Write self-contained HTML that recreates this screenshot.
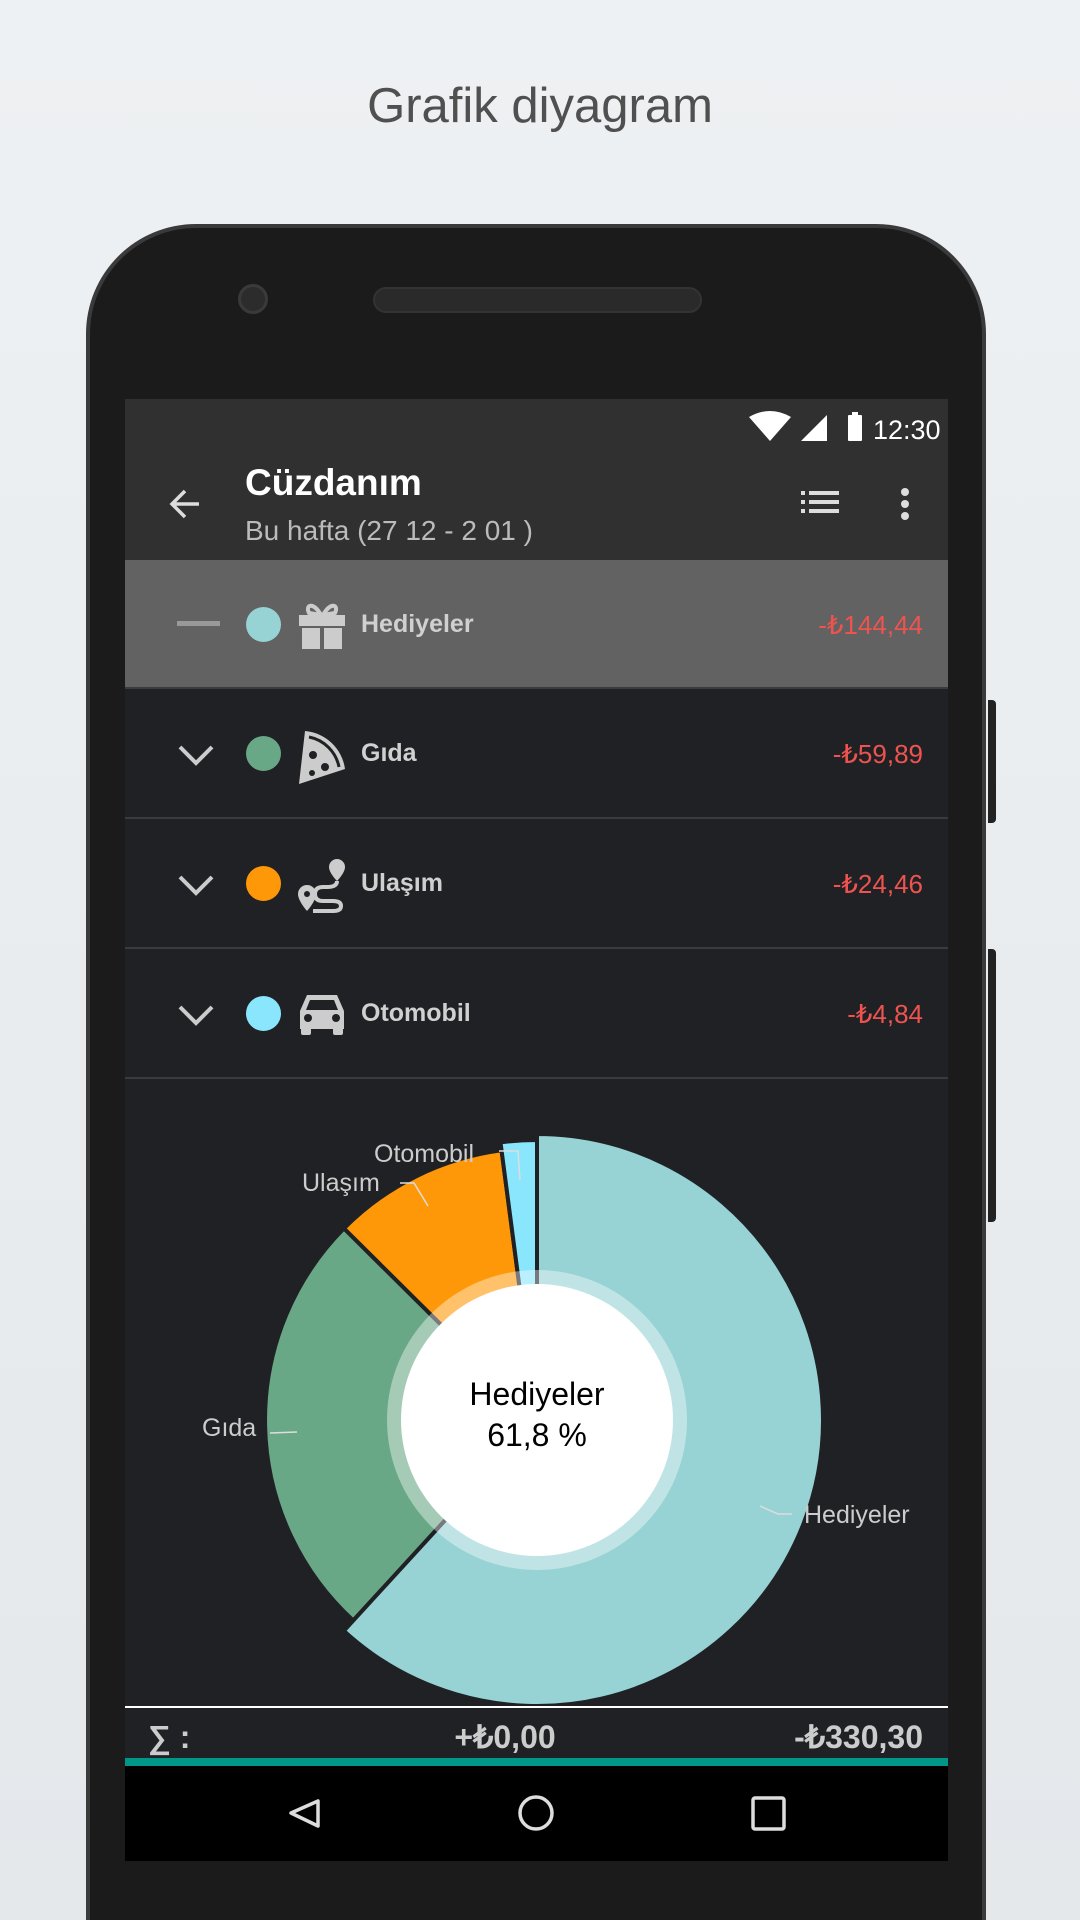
<!DOCTYPE html>
<html style="background:#e6eaed"><head><meta charset="utf-8"><style>
*{margin:0;padding:0;box-sizing:border-box}
html,body{width:1080px;height:1920px;overflow:hidden}
body{background:linear-gradient(#eef1f3,#e4e8eb);font-family:"Liberation Sans",sans-serif;position:relative}
.abs{position:absolute}
.title{left:0;width:1080px;top:78px;text-align:center;font-size:49px;color:#505050}
.phone{left:86px;top:224px;width:900px;height:1696px;background:#1b1b1b;border-radius:110px 110px 0 0;border:4px solid #3a3a3a;border-bottom:none}
.btn{background:#222;border-radius:0 4px 4px 0}
.screen{left:125px;top:399px;width:823px;height:1462px;background:#202124;overflow:hidden}
.row{position:absolute;left:0;width:823px;border-bottom:2px solid #3a3b3e}
.lbl{position:absolute;left:236px;font-weight:bold;font-size:25px;color:#d0d0d0}
.amt{position:absolute;right:25px;font-size:26px;color:#ef5350}
.dot{position:absolute;left:121px;width:35px;height:35px;border-radius:50%}
</style></head><body>
<div class="abs title">Grafik diyagram</div>
<div class="abs phone"></div>
<div class="abs btn" style="left:988px;top:700px;width:8px;height:123px"></div>
<div class="abs btn" style="left:988px;top:949px;width:8px;height:273px"></div>
<div class="abs" style="left:373px;top:287px;width:329px;height:26px;border-radius:13px;background:#2a2a2a;border:2px solid #333"></div>
<div class="abs" style="left:238px;top:284px;width:30px;height:30px;border-radius:50%;background:#2c2c2c;border:3px solid #3a3a3a"></div>
<div class="abs screen">
 <div class="abs" style="left:0;top:0;width:823px;height:161px;background:#303030"></div>
 <svg class="abs" style="left:620px;top:10px" width="210" height="36">
  <path d="M4 8 Q25 -4 46 8 L25 32Z" fill="#fff"/>
  <path d="M56 32 L82 6 L82 32Z" fill="#fff"/>
  <rect x="103" y="6" width="14" height="26" rx="1" fill="#fff"/><rect x="107" y="3" width="6" height="4" fill="#fff"/>
  <text x="128" y="30" font-size="27" fill="#fff" font-family="Liberation Sans">12:30</text>
 </svg>
 <svg class="abs" style="left:40px;top:85px" width="40" height="40"><path d="M34 20H8M20 7L7 20L20 33" stroke="#ddd" stroke-width="3.5" fill="none"/></svg>
 <div class="abs" style="left:120px;top:63px;font-size:37px;color:#fff;font-weight:bold">Cüzdanım</div>
 <div class="abs" style="left:120px;top:116px;font-size:28px;color:#bbb">Bu hafta (27 12 - 2 01 )</div>
 <svg class="abs" style="left:676px;top:92px" width="40" height="26"><g fill="#ddd"><rect x="0" y="0" width="4" height="4"/><rect x="8" y="0" width="30" height="4"/><rect x="0" y="9" width="4" height="4"/><rect x="8" y="9" width="30" height="4"/><rect x="0" y="18" width="4" height="4"/><rect x="8" y="18" width="30" height="4"/></g></svg>
 <svg class="abs" style="left:772px;top:86px" width="16" height="40"><g fill="#ddd"><circle cx="8" cy="7" r="4"/><circle cx="8" cy="19" r="4"/><circle cx="8" cy="31" r="4"/></g></svg>

 <div class="row" style="top:161px;height:129px;background:#626262">
  <div class="abs" style="left:52px;top:61px;width:43px;height:5px;background:#999"></div>
  <div class="dot" style="top:47px;background:#97d3d4"></div>
  <svg class="abs" style="left:172px;top:41px" width="50" height="50"><g fill="#ccc"><rect x="2" y="14" width="46" height="11"/><rect x="5" y="27" width="18" height="21"/><rect x="27" y="27" width="18" height="21"/><path d="M24 14 C16 0 8 4 12 12Z M26 14 C34 0 42 4 38 12Z" stroke="#ccc" stroke-width="4" fill="none"/></g></svg>
  <div class="lbl" style="top:50px">Hediyeler</div>
  <div class="amt" style="top:50px">-₺144,44</div>
 </div>
 <div class="row" style="top:290px;height:130px">
  <svg class="abs" style="left:52px;top:55px" width="40" height="24"><path d="M3 3L19 19L35 3" stroke="#ccc" stroke-width="4" fill="none"/></svg>
  <div class="dot" style="top:47px;background:#69a887"></div>
  <svg class="abs" style="left:172px;top:40px" width="50" height="56"><path d="M8 2 A44 44 0 0 1 48 40 L2 55Z" fill="#ccc"/><g fill="#202124"><circle cx="16" cy="26" r="4"/><circle cx="28" cy="38" r="4"/><circle cx="15" cy="44" r="3"/></g><path d="M12 8 A38 38 0 0 1 42 38" stroke="#202124" stroke-width="3" fill="none"/></svg>
  <div class="lbl" style="top:50px">Gıda</div>
  <div class="amt" style="top:50px">-₺59,89</div>
 </div>
 <div class="row" style="top:420px;height:130px">
  <svg class="abs" style="left:52px;top:55px" width="40" height="24"><path d="M3 3L19 19L35 3" stroke="#ccc" stroke-width="4" fill="none"/></svg>
  <div class="dot" style="top:47px;background:#ff9808"></div>
  <svg class="abs" style="left:172px;top:38px" width="50" height="56"><g fill="#ccc"><path d="M10 28a9 9 0 0 1 9 9c0 7-9 17-9 17s-9-10-9-17a9 9 0 0 1 9-9z"/><path d="M40 2a8 8 0 0 1 8 8c0 6-8 14-8 14s-8-8-8-14a8 8 0 0 1 8-8z"/></g><circle cx="10" cy="37" r="3" fill="#202124"/><path d="M40 24 L40 24 Q40 30 30 30 L26 30 Q18 30 18 37 Q18 44 26 44 L36 44 Q44 44 44 49 Q44 54 36 54 L16 54" stroke="#ccc" stroke-width="4" fill="none"/></svg>
  <div class="lbl" style="top:50px">Ulaşım</div>
  <div class="amt" style="top:50px">-₺24,46</div>
 </div>
 <div class="row" style="top:550px;height:130px">
  <svg class="abs" style="left:52px;top:55px" width="40" height="24"><path d="M3 3L19 19L35 3" stroke="#ccc" stroke-width="4" fill="none"/></svg>
  <div class="dot" style="top:47px;background:#8ae6fd"></div>
  <svg class="abs" style="left:172px;top:42px" width="50" height="46"><g fill="#ccc"><path d="M10 4H40L47 20V38H3V20Z"/><rect x="4" y="34" width="10" height="10" rx="2"/><rect x="36" y="34" width="10" height="10" rx="2"/></g><path d="M13 9H37L41 19H9Z" fill="#202124"/><g fill="#202124"><circle cx="11" cy="27" r="4"/><circle cx="39" cy="27" r="4"/></g></svg>
  <div class="lbl" style="top:50px">Otomobil</div>
  <div class="amt" style="top:50px">-₺4,84</div>
 </div>
</div>
<svg class="abs" style="left:0;top:0" width="1080" height="1920">
 <g stroke="#202124" stroke-width="4">
 <path d="M537 1420 L353.2 1620.5 A272 272 0 0 1 344 1228.4Z" fill="#69a887"/>
 <path d="M537 1420 L344 1228.4 A272 272 0 0 1 501.5 1150.3Z" fill="#ff9808"/>
 <path d="M537 1420 L500.5 1142.4 A280 280 0 0 1 537 1140Z" fill="#8ae6fd"/>
 <path d="M537 1420 L537 1134 A286 286 0 1 1 343.8 1630.9Z" fill="#97d3d4"/>
 </g>
 <circle cx="537" cy="1420" r="150" fill="#fff" opacity="0.4"/>
 <circle cx="537" cy="1420" r="136" fill="#fff"/>
 <text x="537" y="1405" font-size="32" text-anchor="middle" fill="#000" font-family="Liberation Sans">Hediyeler</text>
 <text x="537" y="1446" font-size="32" text-anchor="middle" fill="#000" font-family="Liberation Sans">61,8 %</text>
 <g font-size="25" fill="#ccc" font-family="Liberation Sans">
 <text x="374" y="1162">Otomobil</text>
 <text x="302" y="1191">Ulaşım</text>
 <text x="202" y="1436">Gıda</text>
 <text x="804" y="1523">Hediyeler</text>
 </g>
 <g stroke="#ddd" stroke-width="1.5" fill="none">
 <path d="M499 1151 L518 1151 L520 1180"/>
 <path d="M400 1183 L414 1183 L428 1206"/>
 <path d="M270 1433 L297 1432"/>
 <path d="M760 1506 L778 1514 L792 1514"/>
 </g>
 <rect x="125" y="1706" width="823" height="2" fill="#fff"/>
 <text x="148" y="1748" font-size="32" font-weight="bold" fill="#ccc" font-family="Liberation Sans">∑ :</text>
 <text x="505" y="1748" font-size="32" font-weight="bold" fill="#ccc" text-anchor="middle" font-family="Liberation Sans">+₺0,00</text>
 <text x="923" y="1748" font-size="32" font-weight="bold" fill="#ccc" text-anchor="end" font-family="Liberation Sans">-₺330,30</text>
 <rect x="125" y="1758" width="823" height="8" fill="#009688"/>
 <rect x="125" y="1766" width="823" height="95" fill="#000"/>
 <path d="M318 1801 L318 1826 L291 1813Z" stroke="#ddd" stroke-width="3.5" fill="none" stroke-linejoin="round"/>
 <circle cx="536" cy="1813" r="16" stroke="#ddd" stroke-width="3.5" fill="none"/>
 <rect x="753" y="1798" width="31" height="31" rx="2" stroke="#ddd" stroke-width="3.5" fill="none"/>
</svg>
</body></html>
